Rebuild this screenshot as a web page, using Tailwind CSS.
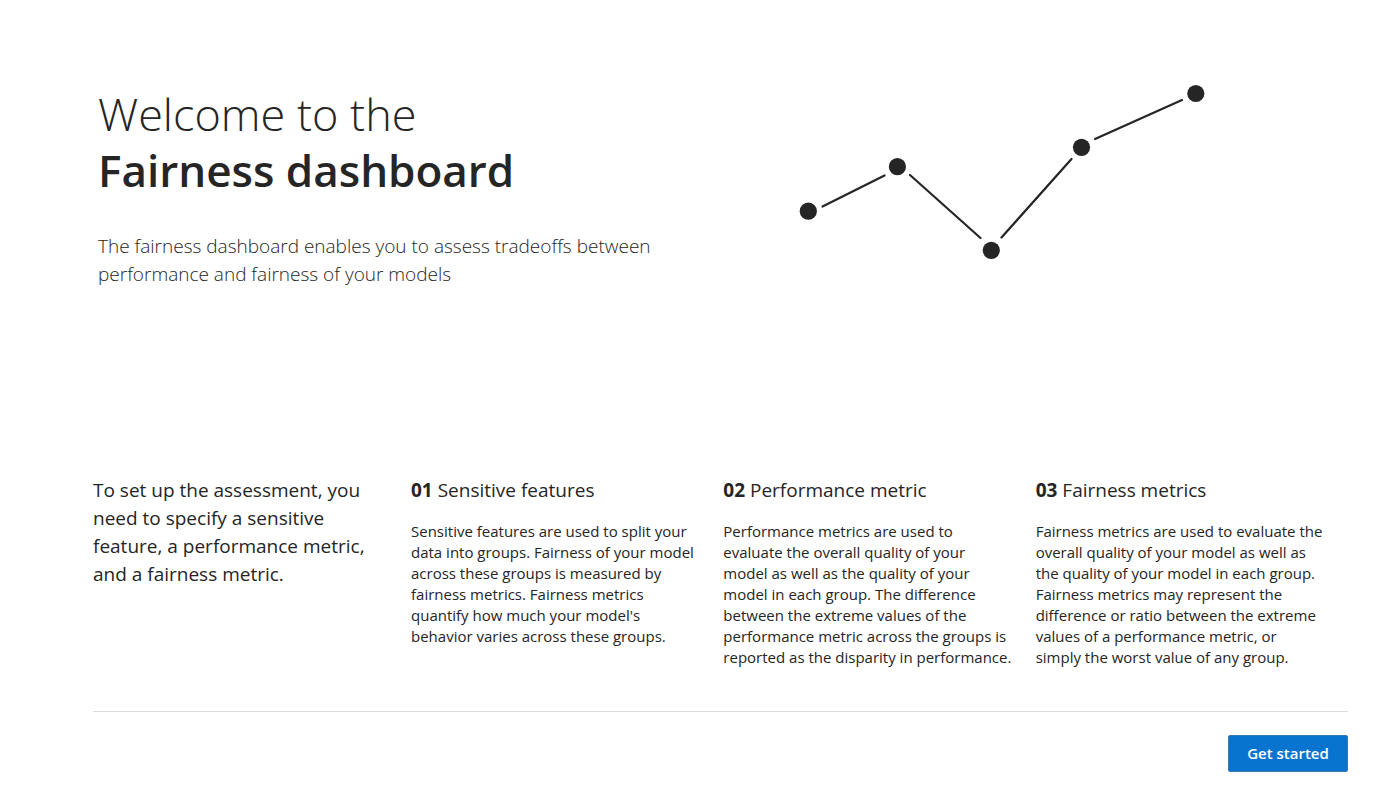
<!DOCTYPE html>
<html lang="en">
<head>
<meta charset="utf-8">
<title>Fairness dashboard</title>
<script src="https://cdn.jsdelivr.net/npm/@tailwindcss/browser@4"></script>
</head>
<body class="bg-white text-[#252525] font-['Open_Sans','Noto_Sans',sans-serif]">
<main class="min-h-screen pl-[93px] pr-[52px] pt-[77px]">
  <header class="mb-[188px] flex items-start">
    <div class="w-[700px] pl-[5px] pt-2">
      <h1 class="leading-[57px]"><span class="block text-[45px] font-light">Welcome to the</span><span class="block text-[44px] font-semibold">Fairness dashboard</span></h1>
      <p class="mt-[33px] max-w-[580px] text-[19px] leading-[28px] font-light">The fairness dashboard enables you to assess tradeoffs between performance and fairness of your models</p>
    </div>
    <svg class="w-[420px] h-[190px] shrink-0" viewBox="793 77 420 190" fill="#252525" stroke="#252525" stroke-width="2.2" stroke-linecap="round" aria-hidden="true">
      <g stroke="none"><circle cx="808.3" cy="211.2" r="8.6"/><circle cx="897.4" cy="166.7" r="8.6"/><circle cx="991.3" cy="250.3" r="8.6"/><circle cx="1081.5" cy="147.3" r="8.6"/><circle cx="1195.8" cy="93.5" r="8.6"/></g>
      <path d="M822.5 206.5 884.5 175.5M910 175 980.5 238M1001.500 237.500 1071.500 159M1095 139 1182 100"/>
    </svg>
  </header>
  <section class="flex items-start">
    <p class="w-[318px] shrink-0 pr-8 text-[19px] leading-[28px]">To set up the assessment, you need to specify a sensitive feature, a performance metric, and a fairness metric.</p>
    <div class="grid flex-1 grid-cols-3 text-[15px] leading-[21px]">
      <article><h2 class="mb-[17px] text-[19px] leading-[28px]"><b>01</b> Sensitive features</h2><p class="max-w-[290px]">Sensitive features are used to split your data into groups. Fairness of your model across these groups is measured by fairness metrics. Fairness metrics quantify how much your model's behavior varies across these groups.</p></article>
      <article><h2 class="mb-[17px] text-[19px] leading-[28px]"><b>02</b> Performance metric</h2><p class="max-w-[290px]">Performance metrics are used to evaluate the overall quality of your model as well as the quality of your model in each group. The difference between the extreme values of the performance metric across the groups is reported as the disparity in performance.</p></article>
      <article><h2 class="mb-[17px] text-[19px] leading-[28px]"><b>03</b> Fairness metrics</h2><p class="max-w-[290px]">Fairness metrics are used to evaluate the overall quality of your model as well as the quality of your model in each group. Fairness metrics may represent the difference or ratio between the extreme values of a performance metric, or simply the worst value of any group.</p></article>
    </div>
  </section>
  <footer class="mt-[43px] flex justify-end border-t border-[#dcdcdc] pt-[23px]">
    <button type="button" class="h-[37px] w-[120px] rounded-xs border border-[#3b78ae] bg-[#0974d0] text-[15px] font-semibold text-white">Get started</button>
  </footer>
</main>
</body>
</html>
